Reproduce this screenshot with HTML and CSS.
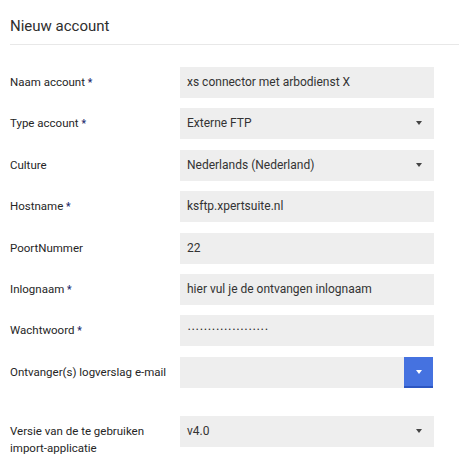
FILE: index.html
```html
<!DOCTYPE html>
<html lang="nl">
<head>
    <meta charset="utf-8">
    <title>Nieuw account</title>
    <link rel="stylesheet" href="styles.css">
</head>
<body>
    <div class="panel">
        <h1 class="panel-title">Nieuw account</h1>

        <form class="account-form">
            <div class="form-row">
                <label class="form-label">Naam account <span class="req">*</span></label>
                <input class="field" type="text" value="xs connector met arbodienst X">
            </div>
            <div class="form-row">
                <label class="form-label">Type account <span class="req">*</span></label>
                <div class="field select">Externe FTP<span class="caret"></span></div>
            </div>
            <div class="form-row">
                <label class="form-label">Culture</label>
                <div class="field select">Nederlands (Nederland)<span class="caret"></span></div>
            </div>
            <div class="form-row">
                <label class="form-label">Hostname <span class="req">*</span></label>
                <input class="field" type="text" value="ksftp.xpertsuite.nl">
            </div>
            <div class="form-row">
                <label class="form-label">PoortNummer</label>
                <input class="field" type="text" value="22">
            </div>
            <div class="form-row">
                <label class="form-label">Inlognaam <span class="req">*</span></label>
                <input class="field" type="text" value="hier vul je de ontvangen inlognaam">
            </div>
            <div class="form-row">
                <label class="form-label">Wachtwoord <span class="req">*</span></label>
                <div class="field password">••••••••••••••••••••</div>
            </div>
            <div class="form-row row-spaced">
                <label class="form-label">Ontvanger(s) logverslag e-mail</label>
                <div class="combo">
                    <input class="field combo-input" type="text" value="">
                    <button class="combo-button" type="button"><span class="caret caret-white"></span></button>
                </div>
            </div>
            <div class="form-row">
                <label class="form-label">Versie van de te gebruiken<br>import-applicatie</label>
                <div class="field select">v4.0<span class="caret"></span></div>
            </div>
        </form>
    </div>
</body>
</html>
```

FILE: styles.css
```css
body {
    margin: 0;
    background: #fff;
    font-family: Roboto, "Liberation Sans", Arial, sans-serif;
    color: #333;
}
.panel {
    padding: 14px 0 0 10px;
}
.panel-title {
    margin: 0;
    font-size: 15px;
    font-weight: normal;
    line-height: 24px;
    color: #2e2e2e;
    padding-bottom: 6px;
    border-bottom: 1px solid #e8e8e8;
}
.account-form {
    padding-top: 22px;
}
.form-row {
    display: grid;
    grid-template-columns: 170px 254px;
    align-items: start;
    margin-bottom: 10.4px;
}
.row-spaced {
    margin-bottom: 28px;
}
.form-label {
    font-size: 11.5px;
    line-height: 17.5px;
    padding-top: 7px;
    color: #262626;
    white-space: nowrap;
}
.req {
    color: #1f2d6e;
    font-size: 10px;
    font-weight: bold;
}
.field {
    box-sizing: border-box;
    height: 31px;
    width: 100%;
    margin: 0;
    border: none;
    outline: none;
    background: #eee;
    padding: 0 8px 0 7px;
    font-family: inherit;
    font-size: 12px;
    color: #333;
    line-height: 31px;
}
.select {
    position: relative;
}
.caret {
    position: absolute;
    right: 12px;
    top: 13px;
    width: 0;
    height: 0;
    border-left: 3.5px solid transparent;
    border-right: 3.5px solid transparent;
    border-top: 4px solid #444;
}
.password {
    font-size: 7px;
    letter-spacing: 1.7px;
    line-height: 31px;
    color: #222;
    padding-left: 8px;
}
.combo {
    display: flex;
    height: 31px;
}
.combo-input {
    flex: 1;
}
.combo-button {
    position: relative;
    width: 29px;
    height: 31px;
    border: none;
    border-bottom: 2px solid #2c56c2;
    background: #4572e0;
    padding: 0;
    margin-right: 1px;
}
.caret-white {
    right: 11px;
    top: 13px;
    border-top-color: #fff;
}
```
